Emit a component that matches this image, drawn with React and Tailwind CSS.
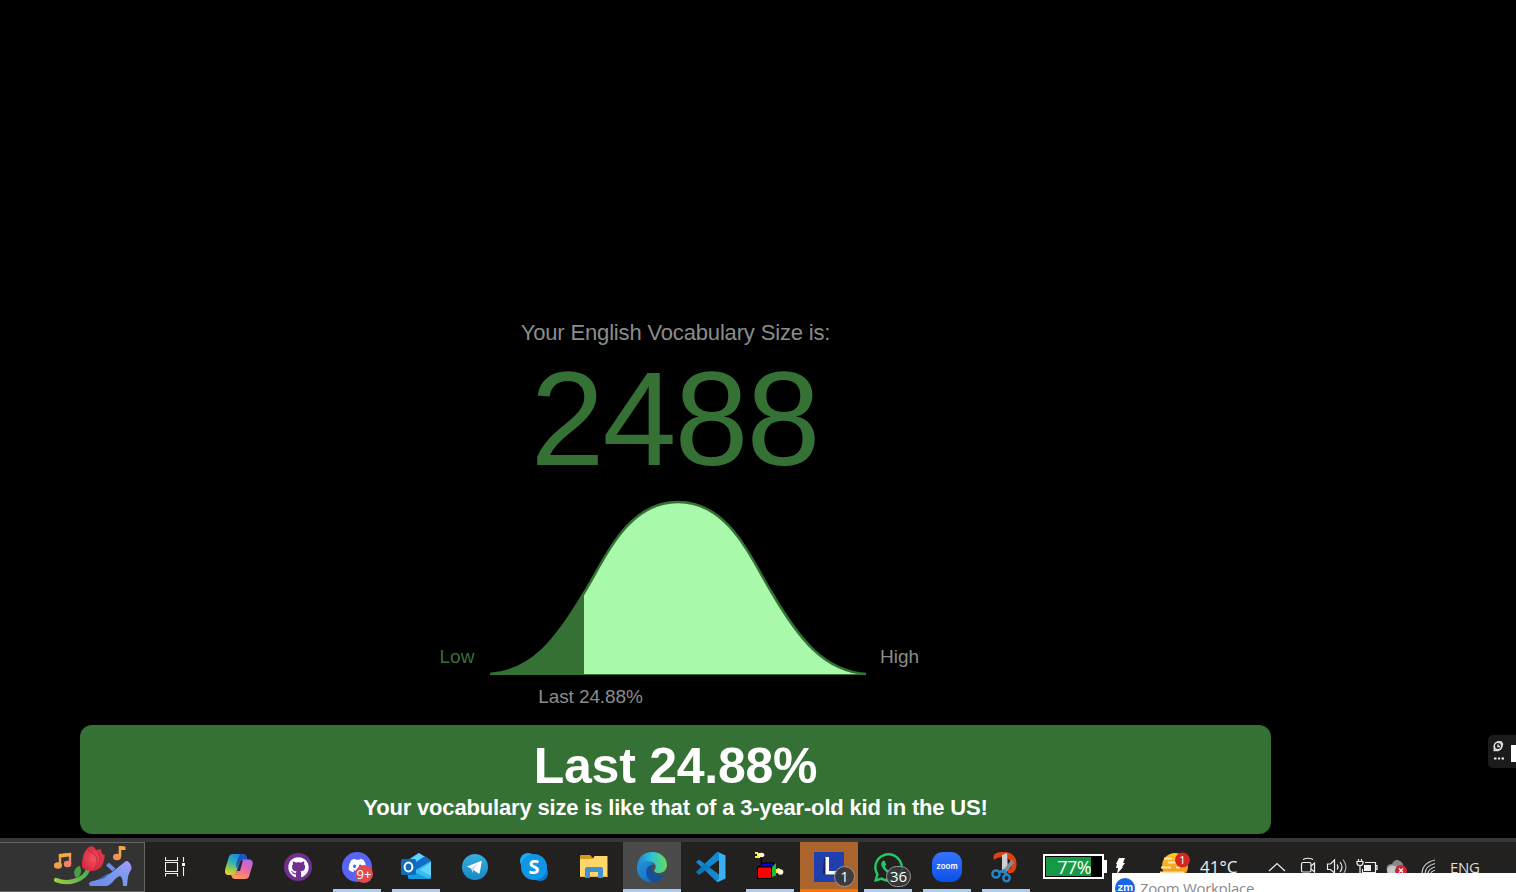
import React from 'react';
import { FaGithub, FaDiscord, FaWhatsapp } from 'react-icons/fa';

const Svg = ({ children, w = 32, h = 32 }) => (
  <svg width={w} height={h} viewBox={`0 0 ${w} ${h}`} className="block shrink-0">{children}</svg>
);

const TaskButton = ({ children, line, bg = '' }) => (
  <div className={`relative mr-px flex h-[50px] w-[58px] shrink-0 items-center justify-center ${bg}`}>
    {children}
    {line && <div className={`absolute bottom-0 left-0 right-0 mx-auto h-[3px] ${line}`} />}
  </div>
);

const BLUE = 'w-12 bg-[#a9cdf3]';

function Party() {
  return (
    <Svg w={80} h={44}>
      <defs>
        <linearGradient id="note" x1="0" y1="0" x2="1" y2="1"><stop offset="0" stopColor="#f4a93c" /><stop offset="1" stopColor="#f57d6c" /></linearGradient>
        <linearGradient id="stem"><stop stopColor="#9bcf3c" /><stop offset="1" stopColor="#4fae57" /></linearGradient>
        <linearGradient id="shoe" x1="1" y1="0" x2="0.3" y2="1"><stop stopColor="#a99af5" /><stop offset=".5" stopColor="#7b9bf0" /><stop offset="1" stopColor="#6e8cea" /></linearGradient>
        <radialGradient id="rose"><stop stopColor="#f4525c" /><stop offset="1" stopColor="#d92c44" /></radialGradient>
      </defs>
      <path d="M6 19V9L16 8V18" fill="none" stroke="url(#note)" strokeWidth="2.400" />
      <path d="M5 10L17 8.500" stroke="#f4a93c" strokeWidth="3.500" />
      <ellipse cx="4" cy="19.500" rx="4" ry="3.200" fill="#f3a04d" /><ellipse cx="13.500" cy="18" rx="3.800" ry="3.200" fill="#f58069" />
      <path d="M2 34C15 39 30 34 34 24" fill="none" stroke="url(#stem)" strokeWidth="4.200" strokeLinecap="round" />
      <path d="M22 32C18 26 21 21 26 20C28 26 27 30 22 32Z" fill="#4a9e43" />
      <path d="M28 19C28 12 30 5 34 2C37 -1 40 0 42 4L47 3L48 8L51 9C50 19 46 24 39 25C33 25 28 23 28 19Z" fill="url(#rose)" />
      <path d="M34 4C38 7 42 8 43 13C44 18 42 21 40 24M43 5C47 9 47 17 43 22" fill="none" stroke="#b91e3d" strokeWidth=".7" />
      <path d="M66 11V1L71 2" fill="none" stroke="#f4a93c" strokeWidth="2.600" />
      <path d="M66 0L71.500 1V4L66 4Z" fill="#f4a93c" /><ellipse cx="63" cy="11" rx="4" ry="3.200" fill="#f59355" />
      <path d="M53.500 18L60 24" fill="none" stroke="#6f8ce8" strokeWidth="4" />
      <path d="M35 38C35 35 40 35 43 34C54 31 64 21 72 15C75 14 79 21 77 24C74 28 74 31 73 40H69C69 35 68 31 66 30C60 32 58 39 53 40H37Q35 40 35 38Z" fill="url(#shoe)" />
      <path d="M43 34C48 31 51 29 55 27C52 32 48 34 43 34Z" fill="#4862bf" />
    </Svg>
  );
}

function TaskView() {
  return (
    <Svg w={20} h={20}>
      <g fill="none" stroke="#eee" strokeWidth="1.100">
        <path d="M.5 0V3.500H12.500V0M.5 5.500H12.500V14.500H.5ZM.5 19.500V16.500H12.500V19.500M18.500 0V5M18.500 10V19" />
      </g>
      <path d="M17 6H20V9H17Z" fill="#fff" />
    </Svg>
  );
}

function Copilot() {
  return (
    <Svg>
      <defs>
        <linearGradient id="cp1" x1=".6" y1="0" x2=".2" y2="1"><stop stopColor="#1686e5" /><stop offset=".45" stopColor="#35b5ae" /><stop offset=".75" stopColor="#a2cb46" /><stop offset="1" stopColor="#f2cd3a" /></linearGradient>
        <linearGradient id="cp2" x1=".7" y1="0" x2=".3" y2="1"><stop stopColor="#b269e9" /><stop offset=".5" stopColor="#ee6a9e" /><stop offset="1" stopColor="#ff9e4f" /></linearGradient>
      </defs>
      <path d="M10 3H20C23 3 23.500 6 24.500 9H19C17 9 16.500 11 16 13L13.500 21C12.700 24 11 25 8 24H5C2 24 1.500 21 2.500 17L5.500 7C6.200 4.500 7.500 3 10 3Z" fill="url(#cp1)" />
      <path d="M17 3H20C23 3 23.500 6 24.500 9H19C17 9 16 11 15.500 13L14 18C12 12 15 7 17 3Z" fill="#1b57c4" />
      <path d="M22 28H12C9 28 8.500 25 8 23C11 24 13 23 14 20L17 11C17.700 9 19 8.500 22 8.500H26C29 8.500 30.500 11 29.500 14L26.500 24C25.700 27 24.500 28 22 28Z" fill="url(#cp2)" />
      <path d="M17 11L14 20H17L20 9C18.500 9 17.500 9.500 17 11Z" fill="#292346" />
    </Svg>
  );
}

function Outlook() {
  return (
    <Svg>
      <path d="M6 10L18 2L31 10V28H8Z" fill="#1768b8" />
      <path d="M10 8L19 2L30 9L18 18Z" fill="#62d5f7" />
      <path d="M13 13L25 5L31 10L17 20Z" fill="#126cc8" />
      <path d="M14 20L31 10V25Q31 28 28 28H10Z" fill="#35bcf0" />
      <path d="M8 18L29 28H11Q8 28 8 25Z" fill="#159ce0" />
      <path d="M31 11V25L20 19Z" fill="#62d5f7" />
      <rect x="1" y="8" width="15" height="16" rx="1.500" fill="#0f6cbd" />
      <ellipse cx="8.500" cy="16" rx="3.900" ry="4.500" fill="none" stroke="#fff" strokeWidth="2" />
    </Svg>
  );
}

function Telegram() {
  return (
    <Svg>
      <defs><linearGradient id="tg" x1="0" y1="0" x2="0" y2="1"><stop stopColor="#38addf" /><stop offset="1" stopColor="#1689c4" /></linearGradient></defs>
      <circle cx="16" cy="16" r="13" fill="url(#tg)" />
      <path d="M8 15.500L22 10Q23 9.800 22.700 11L20.800 21.500Q20.500 23 19.200 22.200L12 17.500Z" fill="#fff" />
      <path d="M12 17.500L19.500 12.500L14.500 18.200L13.800 22Z" fill="#c5deed" />
    </Svg>
  );
}

function Folder() {
  return (
    <Svg>
      <path d="M3 5Q3 4 4 4H13L16 7H28V13H3Z" fill="#d79a16" />
      <path d="M3 8H16L17.500 5H30.500V26H3Z" fill="#ffd768" />
      <path d="M8 27V18Q8 16 10 16H24Q26 16 26 18V27H21V21H13V27Z" fill="#4191d2" />
      <path d="M3 25H8V26H3ZM13 25H21V26H13ZM26 25H30.500V26H26Z" fill="#e7b840" />
    </Svg>
  );
}

function Edge() {
  return (
    <Svg>
      <defs>
        <linearGradient id="e1" x1="0" y1=".4" x2="1" y2=".4"><stop stopColor="#1d83d7" /><stop offset=".5" stopColor="#2fc3d4" /><stop offset="1" stopColor="#66dd58" /></linearGradient>
        <linearGradient id="e2" x1="0" y1="0" x2="1" y2="1"><stop stopColor="#2793dc" /><stop offset="1" stopColor="#1262b9" /></linearGradient>
      </defs>
      <path d="M1 15C2 6 8 1 16 1C25 1 31 7 31 14C31 19 27 22 23 22C19 22 17 20 19 18C23 11 10 7 1 15Z" fill="url(#e1)" />
      <path d="M1 15C6 8 15 9 19 14C14 12 11 17 13 22C15 27 23 28 29 23C25 30 18 32 12 31C5 29 0 23 1 15Z" fill="url(#e2)" />
      <path d="M16 14C9 15 8 24 15 31C21 32 26 29 29 23C21 27 14 22 16 14Z" fill="#124f9e" />
    </Svg>
  );
}

function Code() {
  return (
    <Svg>
      <path d="M1 11L4 8.500L24 23.500V30.500L22 31Z" fill="#1687cf" />
      <path d="M1 21L4 24L24 9V1L22 1Z" fill="#087bbd" />
      <path d="M23 1L30.500 4.500V27.500L23 31L21 29.500Q24 30 24 27V5Q24 2 21 2.500Z" fill="#3baff4" />
      <path d="M21 2.500L23 1L24 2V9L14 16L10 13Z" fill="#1687cf" />
    </Svg>
  );
}

function Cube() {
  return (
    <Svg>
      <path d="M7.500 5V13M22 18H27" stroke="#000" strokeWidth="1.500" />
      <path d="M4 16L9 12H21L17 16Z" fill="#0808cc" stroke="#000" />
      <path d="M3.500 16H17.500V27.500H3.500Z" fill="#f00" stroke="#000" />
      <path d="M18 16L22 12V24.500L18 26Z" fill="#18bd38" />
      <path d="M1 1H4V2H8V5H6V7H1V5H3V3H1Z" fill="#ffef24" /><ellipse cx="7.500" cy="4" rx="3" ry="2.200" fill="#fff9dd" />
      <path d="M22 18L25 17L27 19L25 22H22Z" fill="#ffef24" /><circle cx="26.500" cy="21" r="2.800" fill="#fff9dd" />
    </Svg>
  );
}

function Snip() {
  return (
    <Svg>
      <path d="M4 9C2 2 7 1 14 1C23 1 27 7 26.500 14C26 20 23 23 18 22L18 19C21 18 23 15 21 11C18 6 11 4 4 9Z" fill="#db4410" />
      <path d="M12 4L17 2L18 19L15 23L12 19Z" fill="#ccd0d3" />
      <path d="M22 8L24 12L16 22L11 22Z" fill="#858b90" />
      <g fill="none" stroke="#2384c8" strokeWidth="2.500"><circle cx="6" cy="23" r="3.600" /><circle cx="16.500" cy="27" r="3.200" /><path d="M9 21L14 19.500L17 23.500" /></g>
    </Svg>
  );
}

const Badge = ({ children, wide }) => (
  <div className={`absolute flex items-center justify-center rounded-full border border-[#999] bg-[#383838]/90 font-['Open_Sans',sans-serif] font-medium leading-none text-white ${wide ? 'left-[27px] top-6 h-[21px] w-[25px] text-[15px]' : 'left-[34px] top-6 h-[21px] w-[21px] text-sm'}`}>{children}</div>
);

function Weather() {
  return (
    <Svg w={32} h={32}>
      <defs><linearGradient id="sun" x1="0" y1="0" x2="0" y2="1"><stop stopColor="#ffc928" /><stop offset="1" stopColor="#ef8c19" /></linearGradient></defs>
      <circle cx="15" cy="14" r="13" fill="url(#sun)" />
      <path d="M4 6.500H12M8 10.500H17M1 15.500H11M16 15.500H20M0 20.500H24" stroke="#ffe5ad" strokeWidth="1.800" />
      <circle cx="22.500" cy="8" r="7.500" fill="#cf2921" />
      <text x="22.500" y="12" textAnchor="middle" fontSize="11" fill="#fff" fontFamily="Open Sans, sans-serif">1</text>
    </Svg>
  );
}

function Tray() {
  return (
    <Svg w={180} h={24}>
      <g fill="none" stroke="#eee" strokeWidth="1.200">
        <path d="M1 16L9 8.500L17 16" />
        <path d="M35 4.500Q40 2 45 4.500" /><rect x="33.500" y="7.500" width="9.500" height="9.500" rx="1.500" /><path d="M43 11L46.500 8V17L43 14" />
        <path d="M59.500 9H62.500L66.500 5V18L62.500 14.500H59.500Z" /><path d="M69 9.500Q71 12 69 14.500M72 7Q76 12 72 17" /><path d="M75 4.500Q81 12 75 19.500" stroke="#aaa" />
        <path d="M97 7.500H107.500V17.500H94.500V14M107.500 10.500H109V14.500H107.500" /><path d="M90.500 4V6M93.500 4V6M89 6.500H95V8Q95 10.500 92 10.500Q89 10.500 89 8ZM92 10.500V18" />
        <path d="M154 19Q154 8 167 5M157 19Q157 11 167 8.500M160 19Q160 14 167 12M163 19Q163 16 167 15.500" stroke="#ccc" />
      </g>
      <path d="M96 10H103V16H96Z" fill="#eee" />
      <path d="M119 16Q117 9 124 9Q127 3 132 6Q136 8 135 12V19H122Q119 19 119 16Z" fill="#888" />
      <path d="M119 15Q121 9 127 11L131 15L128 19H121Q119 18 119 15Z" fill="#c6c6c6" />
      <circle cx="133" cy="16" r="6" fill="#cf2337" /><path d="M131 13.500L135 17.500M135 13.500L131 17.500" stroke="#fff" strokeWidth="1.300" />
    </Svg>
  );
}

function Taskbar() {
  return (
    <footer className="relative flex h-[54px] shrink-0 border-t-4 border-[#393637] bg-[#222120] font-['Open_Sans',sans-serif]">
      <div className="flex h-[50px] w-[145px] shrink-0 justify-end border-b border-r border-t border-[#666] bg-[#333] pr-2.5 pt-[3px]"><Party /></div>
      <div className="flex w-[65px] shrink-0 items-center justify-center pr-[5px]"><TaskView /></div>
      <TaskButton><Copilot /></TaskButton>
      <TaskButton>
        <div className="flex h-7 w-7 items-center justify-center rounded-full bg-[#70308f]"><FaGithub size={21} color="#fff" /></div>
      </TaskButton>
      <TaskButton line={BLUE}>
        <div className="flex h-[30px] w-[30px] items-center justify-center rounded-full bg-[#5865f2]"><FaDiscord size={19} color="#fff" className="mb-1" /></div>
        <div className="absolute left-[27px] top-[23px] flex h-[18px] w-[18px] items-center justify-center rounded-full bg-[#df4b50] text-[13px] leading-none text-white">9+</div>
      </TaskButton>
      <TaskButton line={BLUE}><Outlook /><div className="absolute bottom-0 right-[5px] h-[3px] w-2.5 bg-[#8199b1]" /></TaskButton>
      <TaskButton><Telegram /></TaskButton>
      <TaskButton>
        <Svg><g fill="#0d97e6"><circle cx="10" cy="10" r="8" fill="#1aaef0" /><circle cx="22" cy="22" r="8" fill="#087dd6" /><circle cx="16" cy="16" r="13" /></g><text x="16" y="23" textAnchor="middle" fontFamily="Open Sans, sans-serif" fontWeight="700" fontSize="20" fill="#fff">S</text></Svg>
      </TaskButton>
      <TaskButton><Folder /></TaskButton>
      <TaskButton bg="bg-[#4b4b4b]" line="w-full bg-[#a9cdf3]"><Edge /></TaskButton>
      <TaskButton><Code /></TaskButton>
      <TaskButton line={BLUE}><Cube /></TaskButton>
      <TaskButton bg="bg-[#ab642b]" line="w-full bg-[#ff7200]">
        <Svg><path d="M1 1H31V31H1Z" fill="#203ead" /><path d="M11 7L14 8V20L24 22V25L10 23Z" fill="#122656" /><path d="M12.500 6H16V20H24V23.500H12.500Z" fill="#fff" /></Svg>
        <Badge>1</Badge>
      </TaskButton>
      <TaskButton line={BLUE}><FaWhatsapp size={33} color="#25c862" /><Badge wide>36</Badge></TaskButton>
      <TaskButton line={BLUE}>
        <div className="flex h-[30px] w-[30px] items-center justify-center rounded-[11px] bg-linear-to-b from-[#3574ff] to-[#0850e8] pb-0.5 font-['Inter',sans-serif] text-[8px] font-semibold leading-none text-white">zoom</div>
      </TaskButton>
      <TaskButton line={BLUE}><Snip /></TaskButton>
      <div className="ml-[7px] mt-3 flex h-[25px] w-[61px] shrink-0 border-2 border-white bg-black p-px">
        <div className="flex h-full w-[45px] items-center justify-end bg-[#159947] text-[18px] leading-none tracking-[-0.6px] text-white">77%</div>
      </div>
      <div className="mt-[18px] h-[13px] w-[3px] shrink-0 bg-white" />
      <div className="ml-2 mt-4 w-[45px] shrink-0"><Svg w={12} h={16}><path d="M4 0H10L8 5H10L7 9H8L2 16L3 10H1L2 6H1Z" fill="#fff" /></Svg></div>
      <div className="mt-2.5 w-10 shrink-0"><Weather /></div>
      <div className="mt-3.5 w-[68px] shrink-0 text-[17px] leading-[22px] text-[#eee]">41°C</div>
      <div className="mt-[13px] w-[182px] shrink-0"><Tray /></div>
      <div className="mt-3.5 shrink-0 text-[15px] leading-[22px] tracking-tight text-[#ddd]">ENG</div>
      <div className="absolute bottom-0 right-0 flex h-[19px] w-[404px] items-start overflow-hidden bg-white pl-[3px] pt-[5px]">
        <div className="flex h-5 w-5 shrink-0 items-center justify-center rounded-full bg-[#1765e8] pb-0.5 font-['Inter',sans-serif] text-[11px] font-semibold leading-none tracking-tight text-white">zm</div>
        <div className="ml-[5px] text-[15px] leading-5 tracking-[-0.3px] text-[#8a8a8a]">Zoom Workplace</div>
      </div>
    </footer>
  );
}

export default function App() {
  return (
    <div className="relative flex h-[892px] w-[1516px] flex-col overflow-hidden bg-black font-['Liberation_Sans',Arial,sans-serif]">
      <main className="ml-20 flex h-[838px] w-[1191px] shrink-0 flex-col items-center pt-[319px] text-[#8c8c8c]">
        <h1 className="text-[22px] leading-7 tracking-[-0.16px]">Your English Vocabulary Size is:</h1>
        <div className="mt-[5px] h-[136px] pr-0.5 text-[133px] leading-[134px] tracking-[-2px] text-[#357035]">2488</div>
        <div className="mt-2.5 flex w-[480px] items-end">
          <span className="mb-[7px] ml-1 w-[49.5px] shrink-0 text-[19px] leading-6 text-[#357035]">Low</span>
          <svg width="378" height="178" viewBox="489 498 378 178" className="block shrink-0">
            <path d="M490 674C532 671 557 639 584 593C607 555 628 502 678 502C728 502 749 555 772 593C799 639 824 671 866 674Z" fill="#a9f9ab" />
            <path d="M490 674C532 671 557 639 584 593V674Z" fill="#357035" />
            <path d="M490 674C532 671 557 639 584 593C607 555 628 502 678 502C728 502 749 555 772 593C799 639 824 671 866 674" fill="none" stroke="#357035" strokeWidth="2.500" />
            <path d="M490 674.500H866" stroke="#357035" />
          </svg>
          <span className="mb-[7px] ml-[13px] shrink-0 text-[19px] leading-6">High</span>
        </div>
        <div className="mr-[170px] mt-[9px] text-[19px] leading-6 tracking-[-0.1px]">Last 24.88%</div>
        <section className="mt-4 flex h-[109px] w-full shrink-0 flex-col items-center rounded-xl bg-[#357035] pt-[13px] font-bold text-white">
          <h2 className="text-[50px] leading-[57px] tracking-[-0.25px]">Last 24.88%</h2>
          <p className="text-[22px] leading-[26px] tracking-[-0.17px]">Your vocabulary size is like that of a 3-year-old kid in the US!</p>
        </section>
      </main>
      <Taskbar />
      <aside className="absolute right-0 top-[735px] flex h-[33px] w-7 items-center justify-between rounded-l-[5px] bg-[#1b1b1b] pl-[5px]">
        <Svg w={14} h={22}>
          <g fill="none" stroke="#ddd" strokeWidth="1.500"><circle cx="5" cy="5" r="3.700" /><path d="M1.300 5V9.500H5Q9 8 9.500 3L8 .8L4 1M5 3.500V5.500H7" /></g>
          <path d="M1 16.500H3.500V18.500H1ZM5 16.500H7V18.500H5ZM8.500 16.500H11V18.500H8.500Z" fill="#eee" />
        </Svg>
        <div className="mt-1 h-[17px] w-[5px] bg-white" />
      </aside>
    </div>
  );
}
